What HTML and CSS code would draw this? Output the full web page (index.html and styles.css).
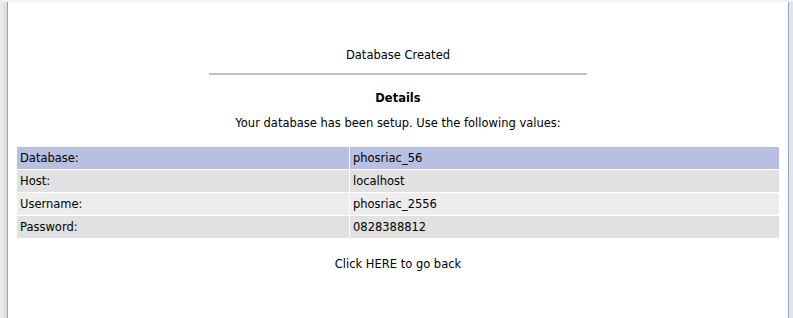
FILE: index.html
```html
<!DOCTYPE html>
<html>
<head>
<meta charset="utf-8">
<link rel="stylesheet" href="styles.css">
</head>
<body>
<div class="topstrip"></div>
<div class="frame">
  <div class="gutter-left"></div>
  <div class="main">
    <div class="title">Database Created</div>
    <div class="rule"></div>
    <div class="details">Details</div>
    <div class="intro">Your database has been setup. Use the following values:</div>
    <div class="values">
      <div class="cell row-hi">Database:</div><div class="cell row-hi">phosriac_56</div>
      <div class="cell row-a">Host:</div><div class="cell row-a">localhost</div>
      <div class="cell row-b">Username:</div><div class="cell row-b">phosriac_2556</div>
      <div class="cell row-a">Password:</div><div class="cell row-a">0828388812</div>
    </div>
    <div class="back">Click HERE to go back</div>
  </div>
  <div class="gutter-right"></div>
</div>
</body>
</html>
```
FILE: styles.css
```css
html, body {
  margin: 0;
  padding: 0;
  height: 100%;
  background: #ffffff;
  font-family: "DejaVu Sans", Verdana, sans-serif;
  font-size: 11.5px;
  color: #000000;
}
.topstrip {
  height: 2px;
  background: #f3f3f3;
}
.frame {
  display: flex;
  height: 316px;
}
.gutter-left {
  width: 7px;
  background: linear-gradient(to right, #ececec, #dcdcdc);
  border-right: 1px solid #8ea4c4;
}
.gutter-right {
  width: 4px;
  background: #e4e4e4;
  border-left: 1px solid #8ea4c4;
}
.main {
  flex: 1;
  display: flex;
  flex-direction: column;
  align-items: center;
  background: #ffffff;
}
.title {
  margin-top: 46px;
  line-height: 14px;
}
.rule {
  margin-top: 11px;
  width: 378px;
  height: 2px;
  background: #c0c0c0;
}
.details {
  margin-top: 16px;
  line-height: 14px;
  font-weight: bold;
}
.intro {
  margin-top: 11px;
  line-height: 14px;
}
.values {
  margin-top: 17px;
  display: grid;
  grid-template-columns: 332px 429px;
  grid-auto-rows: 22px;
  gap: 1px;
}
.cell {
  padding-left: 3px;
  line-height: 22px;
}
.row-hi { background: #b7c0e1; }
.row-a { background: #e1e1e1; }
.row-b { background: #ededed; }
.back {
  margin-top: 19px;
  line-height: 14px;
}
```
